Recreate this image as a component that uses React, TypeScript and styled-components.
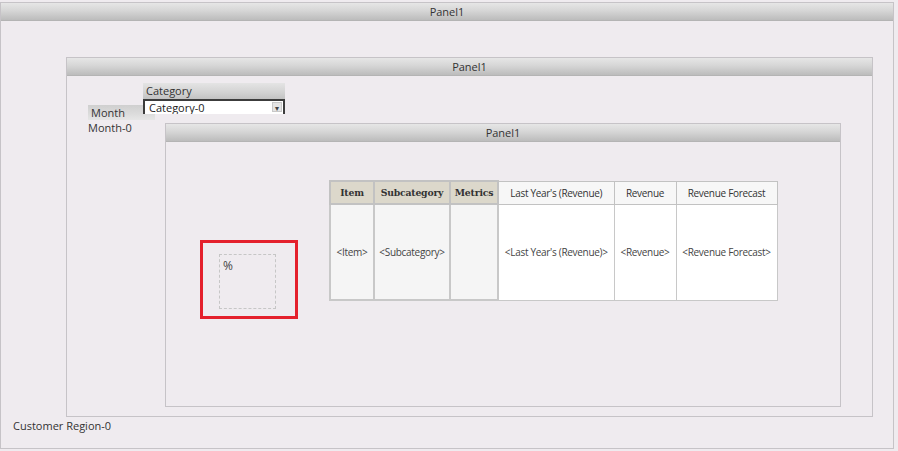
import React from 'react';
import styled, { createGlobalStyle } from 'styled-components';

const GlobalStyle = createGlobalStyle`
  html, body {
    margin: 0;
    padding: 0;
    width: 898px;
    height: 451px;
    overflow: hidden;
    background: #efebef;
  }
  body {
    font-family: 'Open Sans', 'DejaVu Sans', sans-serif;
    font-size: 11px;
    color: #333;
  }
`;

interface Column {
  title: string;
  field: string;
  width: number;
  dimension?: boolean;
}

const columns: Column[] = [
  { title: 'Item', field: '<Item>', width: 44, dimension: true },
  { title: 'Subcategory', field: '<Subcategory>', width: 76, dimension: true },
  { title: 'Metrics', field: '', width: 48, dimension: true },
  { title: "Last Year's (Revenue)", field: "<Last Year's (Revenue)>", width: 116 },
  { title: 'Revenue', field: '<Revenue>', width: 62 },
  { title: 'Revenue Forecast', field: '<Revenue Forecast>', width: 101 },
];

const App = () => {
  return (
    <>
      <GlobalStyle />
      <Panel $w={894} $h={447} $top={2}>
        <PanelHeader>Panel1</PanelHeader>
        <OuterBody>
          <Panel $w={807} $h={360} $left={65}>
            <PanelHeader>Panel1</PanelHeader>
            <SelectorBody>
              <FilterRow>
                <MonthGroup>
                  <MonthLabel>Month</MonthLabel>
                  <MonthValue>Month-0</MonthValue>
                </MonthGroup>
                <CategoryGroup>
                  <CategoryLabel>Category</CategoryLabel>
                  <Dropdown>
                    <DropdownText>Category-0</DropdownText>
                    <DropdownArrow>▾</DropdownArrow>
                  </Dropdown>
                </CategoryGroup>
              </FilterRow>
              <Panel $w={676} $h={284} $left={77}>
                <PanelHeader>Panel1</PanelHeader>
                <GridBody>
                  <Highlight>
                    <FieldBox>%</FieldBox>
                  </Highlight>
                  <Grid>
                    <colgroup>
                      {columns.map((c) => (
                        <col key={c.title} style={{ width: c.width }} />
                      ))}
                    </colgroup>
                    <thead>
                      <tr>
                        {columns.map((c) => (
                          <HeadCell key={c.title} $dimension={c.dimension}>
                            {c.title}
                          </HeadCell>
                        ))}
                      </tr>
                    </thead>
                    <tbody>
                      <tr>
                        {columns.map((c) => (
                          <BodyCell key={c.title} $dimension={c.dimension}>
                            {c.field}
                          </BodyCell>
                        ))}
                      </tr>
                    </tbody>
                  </Grid>
                </GridBody>
              </Panel>
            </SelectorBody>
          </Panel>
          <RegionValue>Customer Region-0</RegionValue>
        </OuterBody>
      </Panel>
    </>
  );
};

export default App;

const Panel = styled.div<{ $w: number; $h: number; $top?: number; $left?: number }>`
  box-sizing: border-box;
  display: flex;
  flex-direction: column;
  flex-shrink: 0;
  width: ${(p) => p.$w}px;
  height: ${(p) => p.$h}px;
  margin-top: ${(p) => p.$top ?? 0}px;
  margin-left: ${(p) => p.$left ?? 0}px;
  border: 1px solid #c6c3c7;
  background: #efebef;
`;

const PanelHeader = styled.div`
  box-sizing: border-box;
  flex-shrink: 0;
  height: 18px;
  line-height: 17px;
  text-align: center;
  font-size: 11px;
  color: #333;
  border-bottom: 1px solid #b4b4b4;
  background: linear-gradient(#e6e6e6, #d6d6d6 45%, #c3c3c3 85%, #bcbcbc);
`;

const OuterBody = styled.div`
  display: flex;
  flex-direction: column;
  padding-top: 36px;
`;

const SelectorBody = styled.div`
  display: flex;
  flex-direction: column;
  padding: 7px 0 0 21px;
`;

const FilterRow = styled.div`
  display: flex;
  align-items: flex-start;
  height: 40px;
`;

const MonthGroup = styled.div`
  display: flex;
  flex-direction: column;
  width: 67px;
  margin-top: 22px;
`;

const MonthLabel = styled.div`
  box-sizing: border-box;
  height: 15px;
  line-height: 15px;
  padding-left: 3px;
  font-size: 11px;
  color: #333;
  background: linear-gradient(#cfcfcf, #dcdcdc 60%, #e6e6e6);
`;

const MonthValue = styled.div`
  margin-top: 1px;
  line-height: 14px;
  font-size: 11px;
  color: #333;
`;

const CategoryGroup = styled.div`
  position: relative;
  z-index: 1;
  display: flex;
  flex-direction: column;
  width: 142px;
  margin-left: -12px;
`;

const CategoryLabel = styled.div`
  box-sizing: border-box;
  height: 16px;
  line-height: 16px;
  padding-left: 3px;
  font-size: 11px;
  color: #333;
  background: linear-gradient(#e4e4e4, #d2d2d2 60%, #c2c2c2);
`;

const Dropdown = styled.div`
  box-sizing: border-box;
  display: flex;
  align-items: flex-start;
  height: 15px;
  overflow: hidden;
  background: #fff;
  border-top: 2px solid #3c3c3c;
  border-left: 2px solid #3c3c3c;
  border-right: 2px solid #3c3c3c;
`;

const DropdownText = styled.div`
  flex: 1;
  padding-left: 4px;
  line-height: 13px;
  font-size: 11px;
  color: #222;
`;

const DropdownArrow = styled.div`
  box-sizing: border-box;
  width: 10px;
  height: 10px;
  margin: 1px 1px 0 0;
  font-size: 8px;
  line-height: 10px;
  text-align: center;
  color: #444;
  background: #e4e4e4;
  border: 1px solid #c8c8c8;
`;

const GridBody = styled.div`
  display: flex;
  align-items: flex-start;
`;

const Highlight = styled.div`
  box-sizing: border-box;
  flex-shrink: 0;
  width: 98px;
  height: 79px;
  margin: 98px 0 0 34px;
  padding: 11px 0 0 16px;
  border: 3px solid #e4202c;
`;

const FieldBox = styled.div`
  box-sizing: border-box;
  width: 57px;
  height: 55px;
  padding: 3px 0 0 3px;
  font-size: 12px;
  line-height: 16px;
  color: #444;
  border: 1px dashed #c6c6c6;
`;

const Grid = styled.table`
  table-layout: fixed;
  border-collapse: collapse;
  width: 446px;
  margin: 38px 0 0 31px;
  border: 1px solid #c2c2c2;
`;

const HeadCell = styled.th<{ $dimension?: boolean }>`
  box-sizing: border-box;
  height: 23px;
  padding: 0;
  text-align: center;
  white-space: nowrap;
  overflow: hidden;
  border: ${(p) => (p.$dimension ? '2px' : '1px')} solid #c2c2c2;
  background: ${(p) => (p.$dimension ? '#dcd8cb' : '#f7f7f7')};
  color: #333;
  font-family: ${(p) =>
    p.$dimension ? "'DejaVu Serif', 'Liberation Serif', serif" : "'Open Sans', sans-serif"};
  font-weight: ${(p) => (p.$dimension ? 700 : 400)};
  font-size: ${(p) => (p.$dimension ? '9.3px' : '10px')};
  letter-spacing: ${(p) => (p.$dimension ? '-0.2px' : '-0.3px')};
`;

const BodyCell = styled.td<{ $dimension?: boolean }>`
  box-sizing: border-box;
  height: 96px;
  padding: 0;
  text-align: center;
  white-space: nowrap;
  overflow: hidden;
  border: ${(p) => (p.$dimension ? '2px' : '1px')} solid #c8c8c8;
  background: ${(p) => (p.$dimension ? '#f5f5f5' : '#ffffff')};
  color: #444;
  font-size: 10px;
  letter-spacing: -0.3px;
`;

const RegionValue = styled.div`
  margin-top: 2px;
  padding-left: 12px;
  line-height: 14px;
  font-size: 11px;
  color: #333;
`;
